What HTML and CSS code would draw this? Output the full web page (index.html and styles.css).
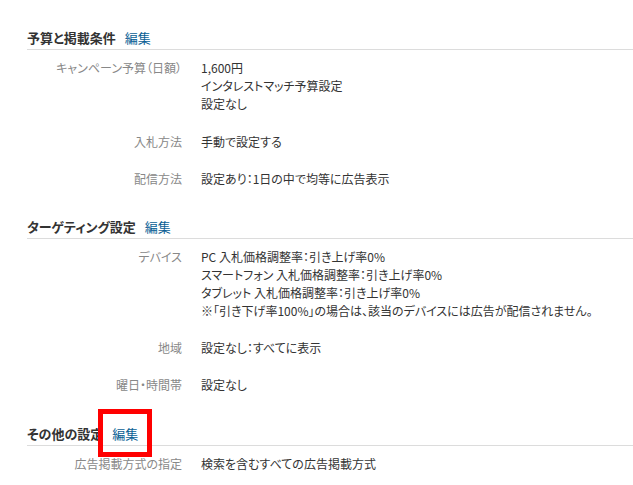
FILE: index.html
```html
<!DOCTYPE html>
<html lang="ja">
<head>
<meta charset="utf-8">
<link rel="stylesheet" href="styles.css">
</head>
<body>
<div class="page">
  <section class="sec">
    <h2 class="sec-head">予算と掲載条件 <a class="edit">編集</a></h2>
    <div class="row row-tall">
      <div class="label">キャンペーン予算（日額）</div>
      <div class="value">1,600円<br>インタレストマッチ予算設定<br>設定なし</div>
    </div>
    <div class="row">
      <div class="label">入札方法</div>
      <div class="value">手動で設定する</div>
    </div>
    <div class="row">
      <div class="label">配信方法</div>
      <div class="value">設定あり：1日の中で均等に広告表示</div>
    </div>
  </section>
  <section class="sec">
    <h2 class="sec-head">ターゲティング設定 <a class="edit">編集</a></h2>
    <div class="row">
      <div class="label">デバイス</div>
      <div class="value">PC 入札価格調整率：引き上げ率0%<br>スマートフォン 入札価格調整率：引き上げ率0%<br>タブレット 入札価格調整率：引き上げ率0%<br>※「引き下げ率100%」の場合は、該当のデバイスには広告が配信されません。</div>
    </div>
    <div class="row">
      <div class="label">地域</div>
      <div class="value">設定なし：すべてに表示</div>
    </div>
    <div class="row">
      <div class="label">曜日・時間帯</div>
      <div class="value">設定なし</div>
    </div>
  </section>
  <section class="sec sec-last">
    <h2 class="sec-head">その他の設定 <a class="edit">編集</a></h2>
    <div class="row">
      <div class="label">広告掲載方式の指定</div>
      <div class="value">検索を含むすべての広告掲載方式</div>
    </div>
  </section>
  <div class="mark"></div>
</div>
</body>
</html>
```
FILE: styles.css
```css
html, body {
  margin: 0;
  padding: 0;
  background: #fff;
}
body {
  font-family: "Noto Sans CJK JP", "Noto Sans", sans-serif;
  font-size: 12px;
  color: #333;
}
.page {
  position: relative;
  padding: 29px 0 0 27px;
}
.sec + .sec {
  margin-top: 20px;
}
.sec + .sec-last {
  margin-top: 21px;
}
.sec-head {
  margin: 0;
  padding-bottom: 2px;
  font-size: 13px;
  line-height: 18px;
  font-weight: bold;
  color: #333;
  border-bottom: 1px solid #dcdcdc;
  font-feature-settings: "palt";
}
.edit {
  font-weight: normal;
  color: #0b5f95;
  margin-left: 6px;
}
.row {
  display: grid;
  grid-template-columns: 155px 1fr;
  column-gap: 19px;
  padding: 9px 0 10px;
  line-height: 18px;
  font-feature-settings: "palt";
}
.row-tall {
  padding-bottom: 11px;
}
.label {
  text-align: right;
  color: #888;
}
.value {
  color: #333;
}
.mark {
  position: absolute;
  left: 98px;
  top: 409px;
  width: 44px;
  height: 38px;
  border: 5px solid #f00;
}
```
